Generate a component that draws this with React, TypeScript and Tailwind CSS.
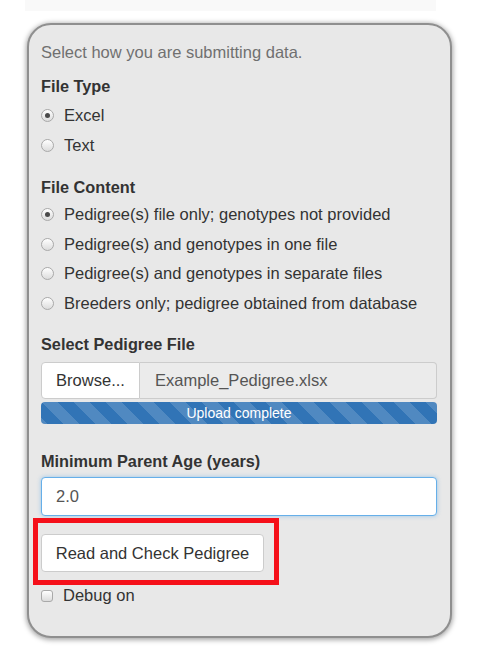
import React from 'react';

const fileTypes = ['Excel', 'Text'];
const contents = [
  'Pedigree(s) file only; genotypes not provided',
  'Pedigree(s) and genotypes in one file',
  'Pedigree(s) and genotypes in separate files',
  'Breeders only; pedigree obtained from database',
];

function Radio({ checked }: { checked?: boolean }) {
  return (
    <span className="w-[13px] h-[13px] rounded-full border border-[#a9a9a9] bg-gradient-to-b from-white to-[#dcdcdc] flex items-center justify-center shrink-0">
      {checked && <span className="w-[5px] h-[5px] rounded-full bg-[#4a4a4a]" />}
    </span>
  );
}

function RadioRow({ label, checked }: { label: string; checked?: boolean }) {
  return (
    <div className="h-[29.5px] flex items-center gap-[10px]">
      <Radio checked={checked} />
      <span className="text-[16.5px] text-[#333]">{label}</span>
    </div>
  );
}

export default function App() {
  return (
    <div className="w-[480px] h-[672px] bg-white overflow-hidden font-['Liberation_Sans',Arial,sans-serif]">
      {/* bottom edge of the notice above, scrolled out of view */}
      <div className="ml-[25px] w-[411px] h-[11px] bg-[#f9f9f9]" />

      <div className="ml-[27px] mt-[12px] w-[425px] h-[615px] rounded-[24px] border-2 border-[#8f8f8f] bg-[#e8e8e8] shadow-[0_1px_5px_1px_rgba(0,0,0,0.35)] pl-[12px] pr-[13px] pt-[17px]">
        <p className="text-[16.5px] leading-[20px] text-[#707070]">Select how you are submitting data.</p>

        <h3 className="mt-[14px] text-[16.3px] leading-[20px] font-bold text-[#333]">File Type</h3>
        <div className="mt-[5px]">
          {fileTypes.map((t, i) => (
            <RadioRow key={t} label={t} checked={i === 0} />
          ))}
        </div>

        <h3 className="mt-[17px] text-[16.3px] leading-[20px] font-bold text-[#333]">File Content</h3>
        <div className="mt-[3px]">
          {contents.map((t, i) => (
            <RadioRow key={t} label={t} checked={i === 0} />
          ))}
        </div>

        <h3 className="mt-[16px] text-[16.3px] leading-[20px] font-bold text-[#333]">Select Pedigree File</h3>
        <div className="mt-[8px] flex h-[37px]">
          <button className="w-[99px] h-full bg-white border border-[#ccc] rounded-l-[4px] text-[16.5px] text-[#333]">
            Browse...
          </button>
          <div className="flex-1 h-full bg-[#ebebeb] border border-l-0 border-[#ccc] rounded-r-[4px] flex items-center pl-[15px] text-[16.5px] text-[#555]">
            Example_Pedigree.xlsx
          </div>
        </div>
        <div className="mt-[3px] h-[22px] rounded-[4px] bg-[#3174b6] bg-[linear-gradient(45deg,rgba(255,255,255,.15)_25%,transparent_25%,transparent_50%,rgba(255,255,255,.15)_50%,rgba(255,255,255,.15)_75%,transparent_75%,transparent)] bg-[length:32px_32px] flex items-center justify-center text-[14px] text-white">
          Upload complete
        </div>

        <h3 className="mt-[27px] text-[16.3px] leading-[20px] font-bold text-[#333]">Minimum Parent Age (years)</h3>
        <div className="mt-[6px] h-[39px] bg-white border border-[#66afe9] rounded-[4px] shadow-[0_0_4px_rgba(102,175,233,0.6)] flex items-center pl-[14px] text-[16.5px] text-[#555]">
          2.0
        </div>

        <div className="mt-[2px] ml-[-8px] w-[246px] h-[67px] border-[5px] border-[#f5101a] pt-[11px] pl-[3px]">
          <button className="w-[223px] h-[38px] bg-white border border-[#ccc] rounded-[4px] text-[16.5px] text-[#333]">
            Read and Check Pedigree
          </button>
        </div>

        <div className="h-[21px] flex items-center gap-[10px]">
          <span className="w-[12px] h-[12px] rounded-[3px] border border-[#a9a9a9] bg-gradient-to-b from-white to-[#dcdcdc] shrink-0" />
          <span className="text-[16.5px] text-[#333]">Debug on</span>
        </div>
      </div>
    </div>
  );
}
